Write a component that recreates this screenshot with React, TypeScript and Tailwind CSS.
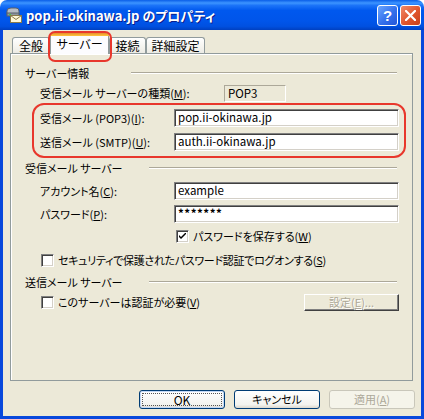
import React from "react";

const font = "font-['Noto_Sans_CJK_JP','Noto_Sans_CJK_SC',sans-serif] [font-feature-settings:'palt']";

function Sunken({ children, className = "" }: { children?: React.ReactNode; className?: string }) {
  return (
    <div
      className={
        "flex items-center bg-white border border-t-[#808080] border-l-[#808080] border-b-white border-r-white shadow-[inset_1px_1px_0_#404040,inset_-1px_-1px_0_#D4D0C8] pl-[3px] text-[11.5px] leading-none " +
        className
      }
    >
      {children}
    </div>
  );
}

function Check({ checked = false }: { checked?: boolean }) {
  return (
    <div className="w-[13px] h-[13px] shrink-0 bg-white border border-t-[#808080] border-l-[#808080] border-b-white border-r-white shadow-[inset_1px_1px_0_#404040,inset_-1px_-1px_0_#D4D0C8] flex items-center justify-center">
      {checked && (
        <svg width="7" height="7" viewBox="0 0 7 7">
          <path d="M0 2 L0 4 L2 6 L7 1 L7 -1 L2 4 Z" fill="#000" />
        </svg>
      )}
    </div>
  );
}

function Heading({ text, w }: { text: string; w: string }) {
  return (
    <div className="flex items-center h-[16px]">
      <div className={"shrink-0 text-[11px] leading-none " + w}>{text}</div>
      <div className="flex-1 mr-[2px] h-[2px] border-t border-t-[#ACA899] border-b border-b-white" />
    </div>
  );
}

function Tab({ label, selected = false, w }: { label: string; selected?: boolean; w: string }) {
  if (selected) {
    return (
      <div
        className={
          "relative z-10 -mb-px h-[21px] bg-[#FCFCFE] border border-[#919B9C] border-b-0 rounded-t-[3px] flex flex-col " +
          w
        }
      >
        <div className="h-[3px] -mx-px -mt-px rounded-t-[3px] bg-[linear-gradient(#E68B2C,#FFC73C)]" />
        <div className="flex-1 flex items-center justify-center text-[12px] leading-none pb-[2px]">{label}</div>
      </div>
    );
  }
  return (
    <div
      className={
        "h-[16px] bg-[linear-gradient(#FFFFFF,#F3F2EC_70%,#ECEBE5)] border border-[#919B9C] border-b-0 rounded-t-[3px] flex items-center justify-center text-[12px] leading-none " +
        w
      }
    >
      {label}
    </div>
  );
}

export default function App() {
  return (
    <div className={"relative w-[424px] h-[419px] flex flex-col bg-white text-black select-none " + font}>
      {/* Title bar */}
      <div className="h-[30px] shrink-0 rounded-t-[7px] bg-[linear-gradient(#0A5EE8_0%,#3D95FF_10%,#1C74F8_18%,#0058EE_35%,#0055EA_70%,#0050E0_88%,#0040C0_100%)] flex items-center pl-[5px] pr-[3px]">
        <svg width="17" height="16" viewBox="0 0 17 16" className="shrink-0">
          <path d="M2 4 Q2 1 6 1 L11 1 Q14 1 14 4 L14 7 L2 7 Z" fill="#B8BCC4" stroke="#59606A" strokeWidth="1" />
          <rect x="2" y="6" width="12" height="3" fill="#8E949E" stroke="#59606A" strokeWidth="1" />
          <rect x="4" y="7" width="2" height="1" fill="#3CD43C" />
          <rect x="5.5" y="8.5" width="11" height="7" fill="#FFF7D8" stroke="#8A7A4A" strokeWidth="1" />
          <path d="M5.5 8.5 L11 12.5 L16.5 8.5" fill="none" stroke="#8A7A4A" strokeWidth="1" />
        </svg>
        <div className="ml-[4px] text-white font-bold text-[13px] leading-none [text-shadow:1px_1px_0_#0A1E8C] whitespace-nowrap">
          pop.ii-okinawa.jp のプロパティ
        </div>
        <div className="flex-1" />
        <div className="w-[21px] h-[21px] rounded-[3px] border border-white bg-[linear-gradient(135deg,#6AA6FF,#3470EC_55%,#2356D8)] flex items-center justify-center text-white font-bold text-[15px] leading-none font-['Liberation_Sans',sans-serif]">
          ?
        </div>
        <div className="ml-[2px] w-[21px] h-[21px] rounded-[3px] border border-white bg-[linear-gradient(135deg,#F08A6A,#E0552C_55%,#C8401A)] flex items-center justify-center">
          <svg width="11" height="11" viewBox="0 0 11 11">
            <path d="M1 1 L10 10 M10 1 L1 10" stroke="#fff" strokeWidth="2.2" strokeLinecap="square" />
          </svg>
        </div>
      </div>

      {/* Body */}
      <div className="flex-1 flex flex-col bg-[#ECE9D8] border-x-[3px] border-b-[3px] border-[#0848DC] pt-[3px] pl-[7px] pr-[6px]">
        {/* Tabs */}
        <div className="flex items-end h-[20px] pl-[2px]">
          <Tab label="全般" w="w-[38px]" />
          <Tab label="サーバー" selected w="w-[59px]" />
          <Tab label="接続" w="w-[37px]" />
          <Tab label="詳細設定" w="w-[59px]" />
        </div>

        {/* Panel */}
        <div className="mr-[2px] h-[328px] border border-[#919B9C] shadow-[inset_1px_1px_0_#fff] bg-[#ECE9D8] pl-[14px] pr-[13px] flex flex-col text-[11px] leading-none">
          <div className="mt-[11px]">
            <Heading text="サーバー情報" w="w-[106px]" />
          </div>

          <div className="mt-[4px] h-[17px] flex items-center pl-[15px]">
            <div className="w-[184px]">
              受信メール サーバーの種類(<u>M</u>):
            </div>
            <div className="w-[62px] h-[17px] flex items-center pl-[3px] text-[11.5px] border border-t-[#ACA899] border-l-[#ACA899] border-b-white border-r-white">
              POP3
            </div>
          </div>

          <div className="mt-[7px] h-[18px] flex items-center pl-[15px]">
            <div className="w-[134px]">
              受信メール (POP3)(<u>I</u>):
            </div>
            <Sunken className="flex-1 h-[18px]">pop.ii-okinawa.jp</Sunken>
          </div>

          <div className="mt-[6px] h-[18px] flex items-center pl-[15px]">
            <div className="w-[134px]">
              送信メール (SMTP)(<u>U</u>):
            </div>
            <Sunken className="flex-1 h-[18px]">auth.ii-okinawa.jp</Sunken>
          </div>

          <div className="mt-[9px]">
            <Heading text="受信メール サーバー" w="w-[124px]" />
          </div>

          <div className="mt-[6px] h-[18px] flex items-center pl-[15px]">
            <div className="w-[134px]">
              アカウント名(<u>C</u>):
            </div>
            <Sunken className="flex-1 h-[18px]">example</Sunken>
          </div>

          <div className="mt-[5px] h-[18px] flex items-center pl-[15px]">
            <div className="w-[134px]">
              パスワード(<u>P</u>):
            </div>
            <Sunken className="flex-1 h-[18px] font-bold tracking-[0.5px]">*******</Sunken>
          </div>

          <div className="mt-[5px] h-[16px] flex items-center pl-[151px] gap-[4px]">
            <Check checked />
            <div>
              パスワードを保存する(<u>W</u>)
            </div>
          </div>

          <div className="mt-[8px] h-[16px] flex items-center pl-[16px] gap-[4px]">
            <Check />
            <div className="whitespace-nowrap tracking-[-0.3px]">
              セキュリティで保護されたパスワード認証でログオンする(<u>S</u>)
            </div>
          </div>

          <div className="mt-[6px]">
            <Heading text="送信メール サーバー" w="w-[124px]" />
          </div>

          <div className="mt-[4px] h-[17px] flex items-center pl-[16px] gap-[4px]">
            <Check />
            <div className="flex-1">
              このサーバーは認証が必要(<u>V</u>)
            </div>
            <div className="w-[95px] h-[17px] flex items-center justify-center bg-[#ECE9D8] border border-t-white border-l-white border-b-[#404040] border-r-[#404040] shadow-[inset_-1px_-1px_0_#808080] text-[#ACA899] [text-shadow:1px_1px_0_#fff]">
              設定(<u>E</u>)...
            </div>
          </div>
        </div>

        {/* Buttons */}
        <div className="mt-[9px] flex justify-end gap-[9px] text-[11px]">
          <div className="w-[86px] h-[19px] rounded-[3px] border border-[#003C74] bg-[linear-gradient(#FFFFFF,#F3F3EF_80%,#DCD8CE)] shadow-[inset_0_0_0_1px_#C3D9F7] p-[2px] flex">
            <div className="flex-1 border border-dotted border-[#555] flex items-center justify-center text-[12px] leading-none">
              OK
            </div>
          </div>
          <div className="w-[86px] h-[19px] rounded-[3px] border border-[#003C74] bg-[linear-gradient(#FFFFFF,#F3F3EF_80%,#DCD8CE)] flex items-center justify-center leading-none">
            キャンセル
          </div>
          <div className="w-[86px] h-[19px] rounded-[3px] border border-[#C9C7BA] bg-[#F5F4EA] flex items-center justify-center leading-none text-[#ACA899]">
            適用(<u>A</u>)
          </div>
        </div>
      </div>

      {/* Red annotation overlays */}
      <div className="absolute left-[48px] top-[31px] w-[64px] h-[31px] rounded-[7px] border-2 border-[#E8372C] pointer-events-none z-20" />
      <div className="absolute left-[32px] top-[103px] w-[374px] h-[55px] rounded-[12px] border-2 border-[#E8372C] pointer-events-none z-20" />
    </div>
  );
}
